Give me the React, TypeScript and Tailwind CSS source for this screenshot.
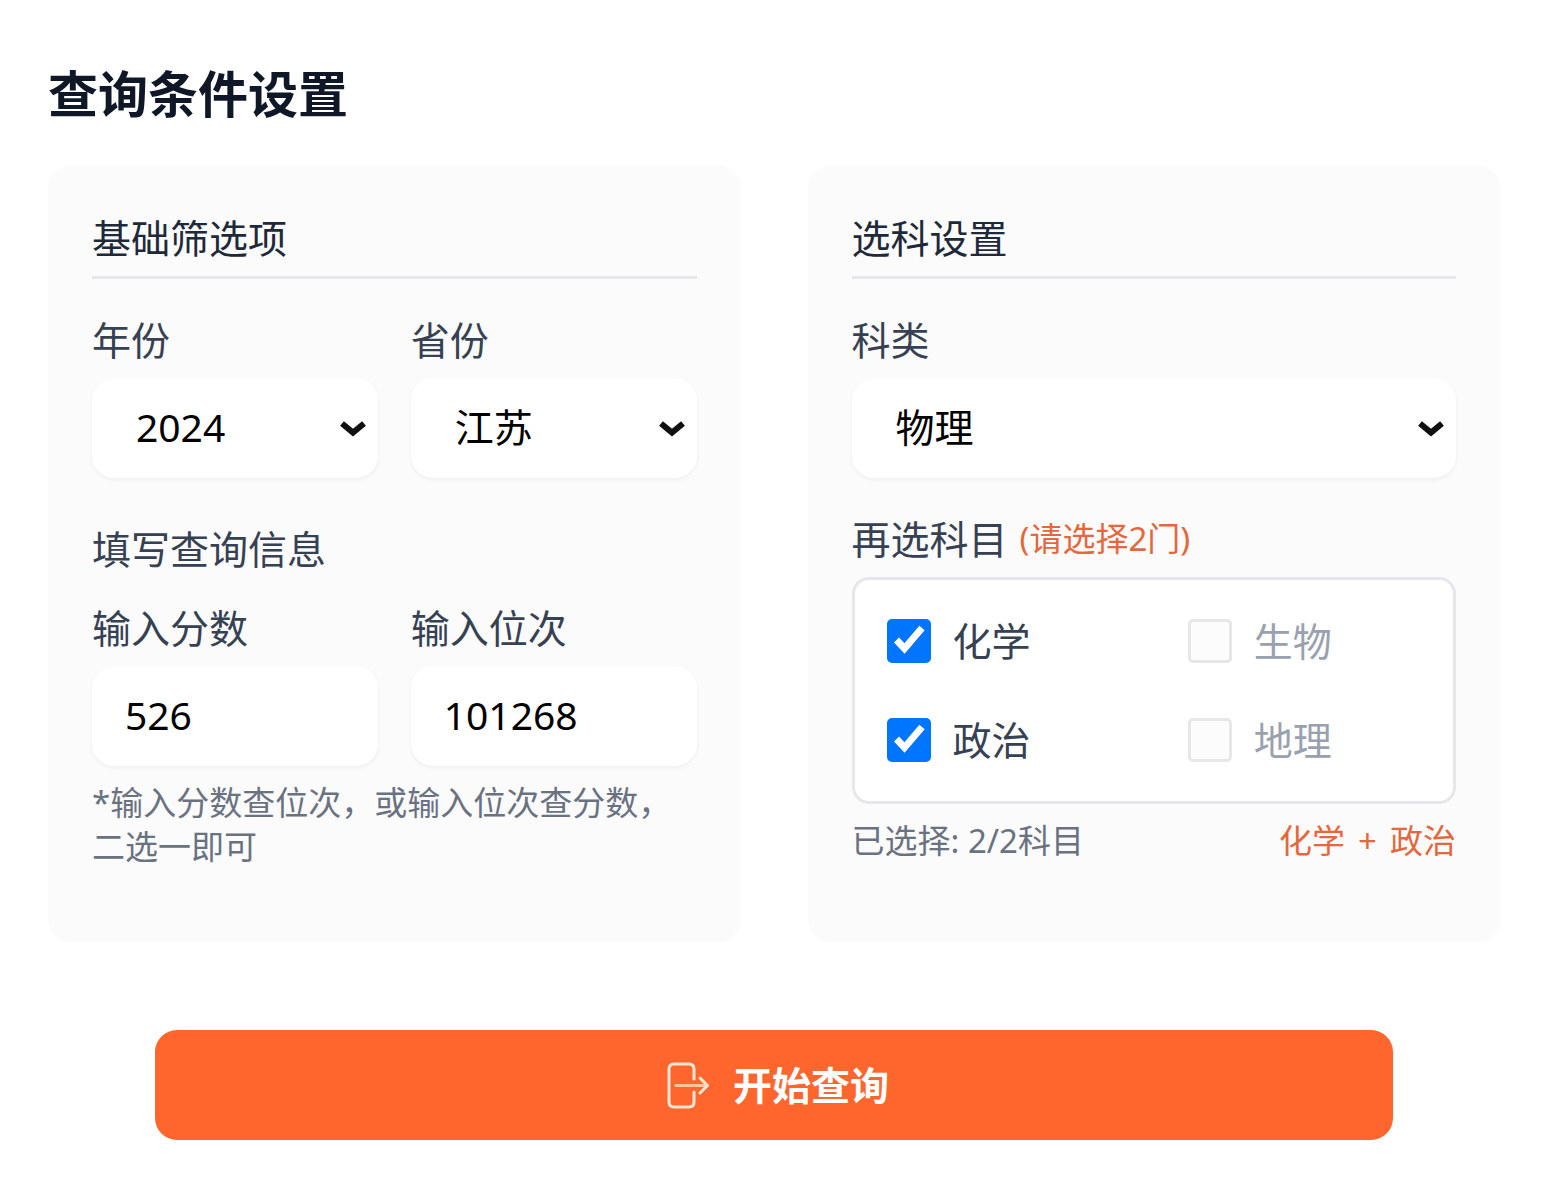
import React, { useState } from 'react';

const YEARS = ['2024', '2023', '2022'];
const PROVINCES = ['江苏', '浙江', '山东'];
const CATEGORIES = ['物理', '历史'];
const SUBJECTS = ['化学', '生物', '政治', '地理'];
const MAX_SUBJECTS = 2;

interface FieldProps {
  id: string;
  label: string;
  value: string;
  onChange: (value: string) => void;
}

interface SelectFieldProps extends FieldProps {
  options: string[];
}

const SelectField = ({ id, label, value, onChange, options }: SelectFieldProps) => (
  <div className="flex min-w-0 flex-1 flex-col gap-[10px]">
    <label htmlFor={id} className="text-[39px] leading-[56px] text-gray-700">
      {label}
    </label>
    <div className="relative">
      <select
        id={id}
        value={value}
        onChange={(e) => onChange(e.target.value)}
        className="h-[100px] w-full appearance-none rounded-[22px] bg-white px-[44px] pb-[2px] text-[39px] text-black shadow-[0_2px_4px_rgba(0,0,0,0.05)] outline-none"
      >
        {options.map((option) => (
          <option key={option}>{option}</option>
        ))}
      </select>
      <svg
        className="pointer-events-none absolute right-[11px] top-[41px] h-5 w-[28px]"
        viewBox="0 0 28 20"
        fill="none"
        stroke="#101010"
        strokeWidth="6"
      >
        <path d="M3 4.5L14 13.5L25 4.5" />
      </svg>
    </div>
  </div>
);

const InputField = ({ id, label, value, onChange }: FieldProps) => (
  <div className="flex min-w-0 flex-1 flex-col gap-[10px]">
    <label htmlFor={id} className="text-[39px] leading-[56px] text-gray-700">
      {label}
    </label>
    <input
      id={id}
      type="text"
      inputMode="numeric"
      value={value}
      onChange={(e) => onChange(e.target.value)}
      className="h-[100px] w-full rounded-[22px] bg-white px-[33px] pb-1 text-[39px] text-black shadow-[0_2px_4px_rgba(0,0,0,0.05)] outline-none"
    />
  </div>
);

interface SubjectCheckboxProps {
  label: string;
  checked: boolean;
  disabled: boolean;
  onToggle: () => void;
}

const SubjectCheckbox = ({ label, checked, disabled, onToggle }: SubjectCheckboxProps) => (
  <label
    className={`flex items-center gap-[22px] text-[39px] leading-[56px] ${
      disabled ? 'text-gray-400' : 'text-gray-700'
    }`}
  >
    <span className="relative flex h-11 w-11 shrink-0">
      <input
        type="checkbox"
        checked={checked}
        disabled={disabled}
        onChange={onToggle}
        className="h-11 w-11 appearance-none rounded-[5px] border-[3px] border-gray-400 bg-white checked:border-[#0075ff] checked:bg-[#0075ff] disabled:border-[#e7e7e8] disabled:bg-[#fcfcfc]"
      />
      {checked && (
        <svg
          className="pointer-events-none absolute inset-0 h-11 w-11"
          viewBox="0 0 44 44"
          fill="none"
          stroke="white"
          strokeWidth="7"
        >
          <path d="M9.500 21L17.500 29.500L35 9" />
        </svg>
      )}
    </span>
    {label}
  </label>
);

const Panel = ({ title, children }: { title: string; children: React.ReactNode }) => (
  <section className="rounded-[22px] bg-[#fbfbfb] px-[44px] pb-[73px] pt-[44px]">
    <h3 className="mb-[33px] border-b-[3px] border-gray-200 pb-[10px] text-[39px] font-normal leading-[56px] text-gray-800">
      {title}
    </h3>
    {children}
  </section>
);

export default function App() {
  const [year, setYear] = useState('2024');
  const [province, setProvince] = useState('江苏');
  const [score, setScore] = useState('526');
  const [rank, setRank] = useState('101268');
  const [category, setCategory] = useState('物理');
  const [subjects, setSubjects] = useState(['化学', '政治']);

  const toggleSubject = (subject: string) => {
    setSubjects((prev) =>
      prev.includes(subject) ? prev.filter((s) => s !== subject) : [...prev, subject]
    );
  };

  return (
    <main className="min-h-screen bg-white pb-[53px] pl-[48px] pr-[53px] pt-[58px] font-['Noto_Sans','Noto_Sans_CJK_SC',sans-serif]">
      <h2 className="mb-9 text-[50px] font-bold leading-[72px] text-gray-900">查询条件设置</h2>

      <div className="grid grid-cols-2 gap-[67px]">
        <Panel title="基础筛选项">
          <div className="flex gap-[33px]">
            <SelectField id="year" label="年份" value={year} onChange={setYear} options={YEARS} />
            <SelectField
              id="province"
              label="省份"
              value={province}
              onChange={setProvince}
              options={PROVINCES}
            />
          </div>

          <h4 className="mb-[23px] mt-[43px] text-[39px] font-normal leading-[56px] text-gray-700">
            填写查询信息
          </h4>
          <div className="flex gap-[33px]">
            <InputField id="score" label="输入分数" value={score} onChange={setScore} />
            <InputField id="rank" label="输入位次" value={rank} onChange={setRank} />
          </div>
          <p className="mt-[15px] text-[33px] leading-[44px] text-gray-500">
            *输入分数查位次，或输入位次查分数，二选一即可
          </p>
        </Panel>

        <Panel title="选科设置">
          <SelectField
            id="category"
            label="科类"
            value={category}
            onChange={setCategory}
            options={CATEGORIES}
          />

          <fieldset className="mt-[33px]">
            <legend className="mb-[10px] flex items-center gap-3 text-[39px] leading-[56px] text-gray-700">
              再选科目
              <span className="text-[33px] text-[#e4673d]">(请选择2门)</span>
            </legend>
            <div className="grid grid-cols-2 gap-x-[68px] gap-y-[43px] rounded-[17px] border-[3px] border-gray-200 bg-white px-8 py-[33px]">
              {SUBJECTS.map((subject) => {
                const checked = subjects.includes(subject);
                return (
                  <SubjectCheckbox
                    key={subject}
                    label={subject}
                    checked={checked}
                    disabled={!checked && subjects.length >= MAX_SUBJECTS}
                    onToggle={() => toggleSubject(subject)}
                  />
                );
              })}
            </div>
          </fieldset>
          <div className="mt-[15px] flex justify-between text-[33px] leading-[44px]">
            <span className="text-gray-500">
              已选择: {subjects.length}/{MAX_SUBJECTS}科目
            </span>
            <span className="flex gap-[13px] text-[#e4673d]">
              {subjects.map((subject, index) => (
                <React.Fragment key={subject}>
                  {index > 0 && <span>+</span>}
                  <span>{subject}</span>
                </React.Fragment>
              ))}
            </span>
          </div>
        </Panel>
      </div>

      <div className="mt-[88px] px-[107px]">
        <button
          type="button"
          className="flex h-[110px] w-full items-center justify-center gap-[22px] rounded-[22px] bg-[#ff662d] pl-2 text-[39px] font-bold text-white"
        >
          <svg
            className="h-12 w-11"
            viewBox="3 0 44 48"
            fill="none"
            stroke="#ffe6d2"
            strokeWidth="3"
            strokeLinecap="round"
            strokeLinejoin="round"
          >
            <path d="M30 18V8Q30 3 25 3H10Q5 3 5 8V41Q5 46 10 46H25Q30 46 30 41V31" />
            <path d="M12 24.500H43" stroke="#ffc3a4" />
            <path d="M36 17L43.500 24.500L36 32" />
          </svg>
          开始查询
        </button>
      </div>
    </main>
  );
}
